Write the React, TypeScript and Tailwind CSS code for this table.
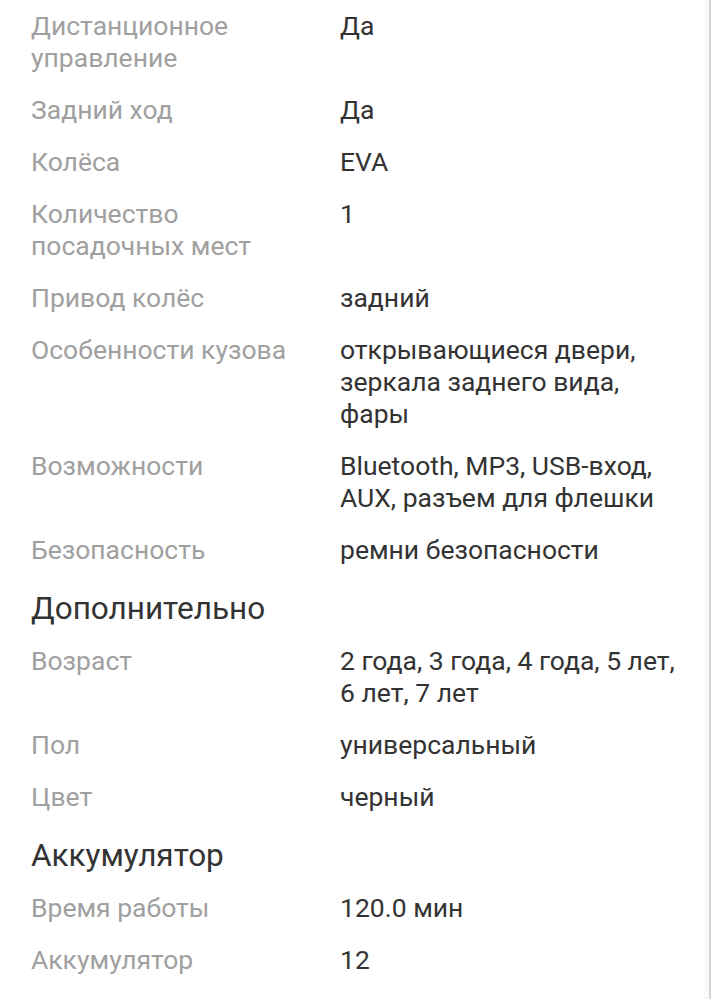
import React from "react";

type Row = { label: string; value: string };
type Block = { title?: string; rows: Row[] };

const blocks: Block[] = [
    {
        rows: [
            { label: "Дистанционное управление", value: "Да" },
            { label: "Задний ход", value: "Да" },
            { label: "Колёса", value: "EVA" },
            { label: "Количество посадочных мест", value: "1" },
            { label: "Привод колёс", value: "задний" },
            { label: "Особенности кузова", value: "открывающиеся двери, зеркала заднего вида, фары" },
            { label: "Возможности", value: "Bluetooth, MP3, USB-вход, AUX, разъем для флешки" },
            { label: "Безопасность", value: "ремни безопасности" },
        ],
    },
    {
        title: "Дополнительно",
        rows: [
            { label: "Возраст", value: "2 года, 3 года, 4 года, 5 лет, 6 лет, 7 лет" },
            { label: "Пол", value: "универсальный" },
            { label: "Цвет", value: "черный" },
        ],
    },
    {
        title: "Аккумулятор",
        rows: [
            { label: "Время работы", value: "120.0 мин" },
            { label: "Аккумулятор", value: "12" },
        ],
    },
];

const App: React.FC = () => {
    return (
        <div className="flex min-h-[999px] w-full bg-white font-['Roboto',sans-serif]">
            <div className="flex flex-1 flex-col gap-[20px] pt-[10px] pl-[31px] pr-[14px]">
                {blocks.map((block, i) => (
                    <React.Fragment key={i}>
                        {/* section title */}
                        {block.title && (
                            <h3 className="mt-[7px] text-[31.5px] leading-[32px] text-[#333333]">
                                {block.title}
                            </h3>
                        )}
                        {block.rows.map((row, j) => (
                            <div key={j} className="flex text-[26.5px] leading-[32px]">
                                <div className="w-[309px] shrink-0 pr-[20px] text-[#a0a0a0]">
                                    {row.label}
                                </div>
                                <div className="flex-1 text-[#333333]">{row.value}</div>
                            </div>
                        ))}
                    </React.Fragment>
                ))}
            </div>
            <div className="w-[5px] bg-[#fafafa]" />
            <div className="w-[2px] bg-[#d4d4d4]" />
        </div>
    );
};

export default App;
